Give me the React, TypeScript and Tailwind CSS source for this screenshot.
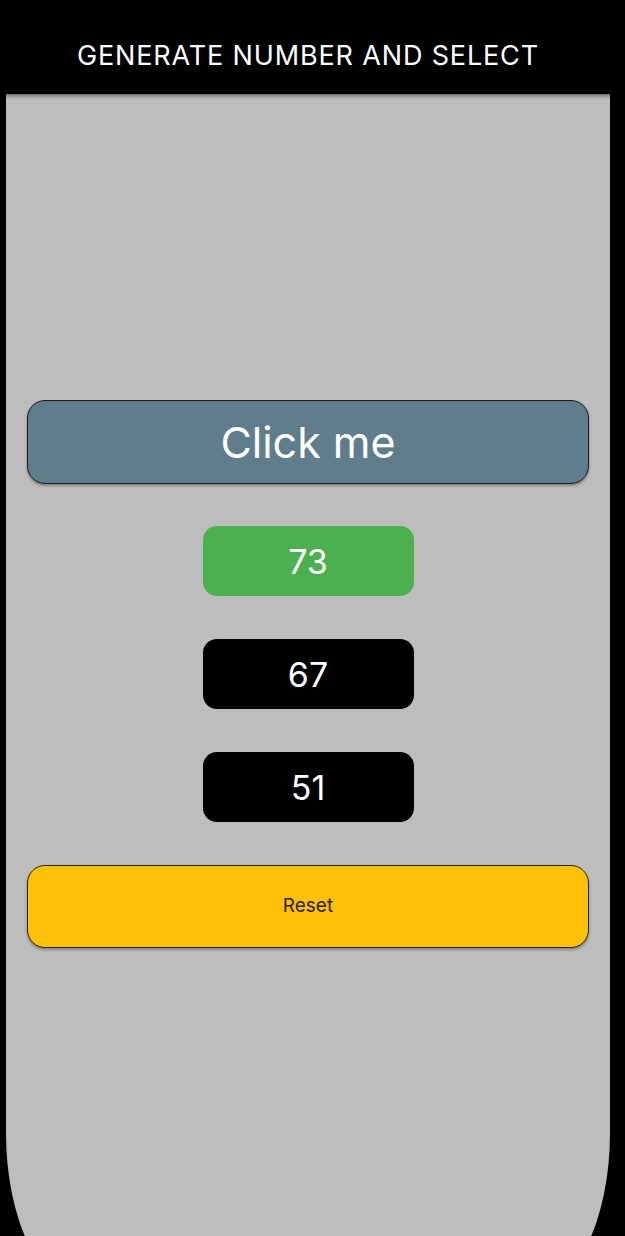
import React from 'react';

const numbers = [
  { value: 73, selected: true },
  { value: 67, selected: false },
  { value: 51, selected: false },
];

export default function App() {
  return (
    <div className="h-[1236px] w-[625px] overflow-hidden bg-black font-['Inter',sans-serif]">
      <header className="relative z-10 flex h-[94px] items-center justify-center pr-[9px] pt-[16px] shadow-[0_2px_4px_rgba(0,0,0,0.45)]">
        <h1 className="text-[27px] font-normal leading-none tracking-[0.85px] text-white">GENERATE NUMBER AND SELECT</h1>
      </header>

      <main className="ml-[6px] flex h-[1199px] w-[604px] flex-col items-center rounded-b-[80px_160px] bg-[#bdbdbd] px-[21px] pt-[306px]">
        <button className="flex h-[84px] w-full items-center justify-center rounded-[18px] border border-[#1a1a1a] bg-[#607d8b] text-[43px] text-white shadow-[0_2px_3px_rgba(0,0,0,0.3)]">
          Click me
        </button>

        <div className="mt-[42px] flex flex-col gap-[43px]">
          {numbers.map((n) => (
            <div
              key={n.value}
              className={`flex h-[70px] w-[211px] items-center justify-center rounded-[14px] text-[34px] text-white ${
                n.selected ? 'bg-[#4caf50]' : 'bg-black'
              }`}
            >
              {n.value}
            </div>
          ))}
        </div>

        <button className="mt-[43px] flex h-[83px] w-full items-center justify-center rounded-[18px] border border-[#2a2200] bg-[#ffc107] text-[19px] text-[#2b2200] shadow-[0_2px_3px_rgba(0,0,0,0.3)]">
          Reset
        </button>
      </main>
    </div>
  );
}
